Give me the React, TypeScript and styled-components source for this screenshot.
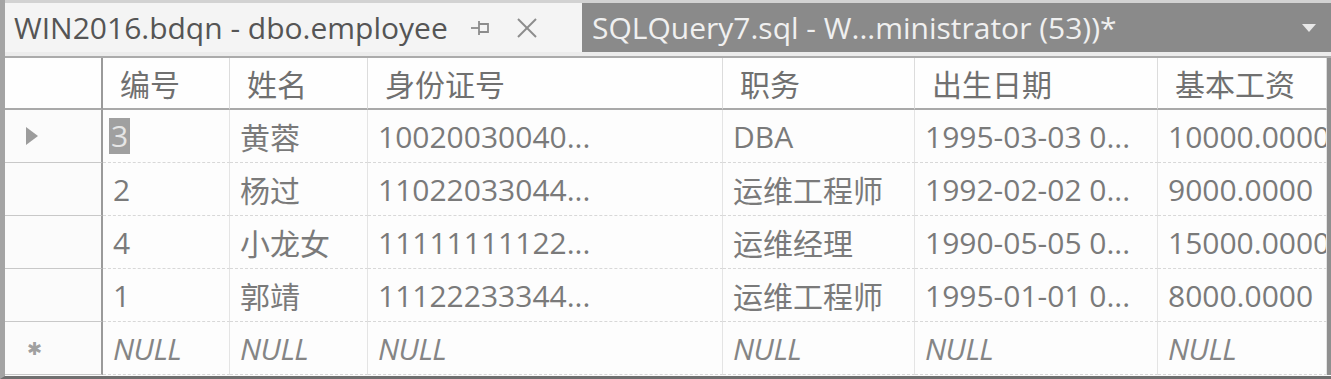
import React from "react";
import styled, { createGlobalStyle } from "styled-components";

const Global = createGlobalStyle`
  html, body { margin: 0; padding: 0; background: #fafafa; }
  body { font-family: "Open Sans", "Noto Sans CJK SC", sans-serif; }
`;

const FONT = `"Open Sans", "Noto Sans CJK SC", sans-serif`;

const Frame = styled.div`
  width: 1331px;
  height: 379px;
  overflow: hidden;
  display: flex;
  flex-direction: column;
  background: #fbfbfb;
  box-sizing: border-box;
  border-left: 5px solid #a4a4a4;
  border-bottom: 3px solid #6f6f6f;
`;

const TabBar = styled.div`
  height: 58px;
  display: flex;
  align-items: flex-start;
  background: #ececec;
  border-top: 3px solid #d2d2d2;
  border-bottom: 2px solid #ababab;
  box-sizing: border-box;
  flex-shrink: 0;
`;

const ActiveTab = styled.div`
  width: 577px;
  height: 49px;
  background: #f4f4f4;
  display: flex;
  align-items: center;
  padding-left: 9px;
  box-sizing: border-box;
  font-family: ${FONT};
  font-size: 30px;
  color: #555;
`;

const TabTitle = styled.span`
  white-space: nowrap;
`;

const TabIcon = styled.span<{ gap: number }>`
  display: inline-flex;
  align-items: center;
  margin-left: ${(p) => p.gap}px;
`;

const InactiveTab = styled.div`
  flex: 1;
  height: 49px;
  background: #8a8a8a;
  display: flex;
  align-items: center;
  padding-left: 10px;
  padding-right: 14px;
  box-sizing: border-box;
  font-family: ${FONT};
  font-size: 30px;
  color: #f0f0f0;
`;

const Spacer = styled.div`
  flex: 1;
`;

const Grid = styled.div`
  display: grid;
  grid-template-columns: 98px 127px 138px 355px 192px 243px 169px 1fr;
  grid-auto-rows: 53px;
  grid-template-rows: 52px;
  font-family: ${FONT};
  font-size: 30px;
  color: #7a7a7a;
`;

const HeadCell = styled.div<{ first?: boolean }>`
  display: flex;
  align-items: center;
  padding-left: 17px;
  background: #fefefe;
  border-bottom: 2px solid #a9a9a9;
  border-right: ${(p) => (p.first ? "2px solid #9a9a9a" : "1px solid #dcdcdc")};
  box-sizing: border-box;
  white-space: nowrap;
  color: #707070;
`;

const RowHead = styled.div`
  display: flex;
  align-items: center;
  padding-left: 20px;
  border-right: 2px solid #9a9a9a;
  border-bottom: 1px solid #c8c8c8;
  box-sizing: border-box;
  background: #fbfbfb;
`;

const Cell = styled.div<{ italic?: boolean }>`
  display: flex;
  align-items: center;
  padding-left: 10px;
  border-right: 1px solid #e4e4e4;
  border-bottom: 1px dashed #d8d8d8;
  box-sizing: border-box;
  white-space: nowrap;
  overflow: hidden;
  background: #fdfdfd;
  font-style: ${(p) => (p.italic ? "italic" : "normal")};
  color: ${(p) => (p.italic ? "#858585" : "#7a7a7a")};
  letter-spacing: ${(p) => (p.italic ? "-0.5px" : "0")};
`;

const Filler = styled.div`
  background: #8f8f8f;
`;

const Selected = styled.span`
  background: #a0a0a0;
  color: #e6e6e6;
  padding: 0 2px;
  line-height: 36px;
  margin-left: -4px;
`;

const Star = styled.span`
  font-size: 18px;
  color: #a0a0a0;
  margin-left: 2px;
`;

const PinIcon = () => (
  <svg width="22" height="18" viewBox="0 0 22 18">
    <g stroke="#8c8c8c" strokeWidth="1.8" fill="none">
      <line x1="1" y1="9" x2="9" y2="9" />
      <line x1="9" y1="2" x2="9" y2="16" />
      <path d="M9 5 H18 V13 H9" />
    </g>
  </svg>
);

const CloseIcon = () => (
  <svg width="22" height="22" viewBox="0 0 22 22">
    <g stroke="#8c8c8c" strokeWidth="2">
      <line x1="2" y1="2" x2="20" y2="20" />
      <line x1="20" y1="2" x2="2" y2="20" />
    </g>
  </svg>
);

const RowArrow = () => (
  <svg width="14" height="20" viewBox="0 0 14 20">
    <path d="M1 1 L13 10 L1 19 Z" fill="#9c9c9c" />
  </svg>
);

const DropArrow = () => (
  <svg width="16" height="10" viewBox="0 0 16 10">
    <path d="M1 1 H15 L8 9 Z" fill="#e8e8e8" />
  </svg>
);

const headers = ["编号", "姓名", "身份证号", "职务", "出生日期", "基本工资"];

const rows = [
  ["3", "黄蓉", "10020030040...", "DBA", "1995-03-03 0...", "10000.0000"],
  ["2", "杨过", "11022033044...", "运维工程师", "1992-02-02 0...", "9000.0000"],
  ["4", "小龙女", "11111111122...", "运维经理", "1990-05-05 0...", "15000.0000"],
  ["1", "郭靖", "11122233344...", "运维工程师", "1995-01-01 0...", "8000.0000"],
];

export default function App() {
  return (
    <>
      <Global />
      <Frame>
        <TabBar>
          <ActiveTab>
            <TabTitle>WIN2016.bdqn - dbo.employee</TabTitle>
            <TabIcon gap={22}>
              <PinIcon />
            </TabIcon>
            <TabIcon gap={24}>
              <CloseIcon />
            </TabIcon>
          </ActiveTab>
          <InactiveTab>
            <TabTitle>SQLQuery7.sql - W...ministrator (53))*</TabTitle>
            <Spacer />
            <DropArrow />
          </InactiveTab>
        </TabBar>
        <Grid>
          <HeadCell first />
          {headers.map((h) => (
            <HeadCell key={h}>{h}</HeadCell>
          ))}
          <Filler />
          {rows.map((r, i) => (
            <React.Fragment key={i}>
              <RowHead>{i === 0 ? <RowArrow /> : null}</RowHead>
              {r.map((v, j) => (
                <Cell key={j}>
                  {i === 0 && j === 0 ? <Selected>{v}</Selected> : v}
                </Cell>
              ))}
              <Filler />
            </React.Fragment>
          ))}
          <RowHead>
            <Star>✱</Star>
          </RowHead>
          {headers.map((h) => (
            <Cell key={h} italic>
              NULL
            </Cell>
          ))}
          <Filler />
        </Grid>
      </Frame>
    </>
  );
}
